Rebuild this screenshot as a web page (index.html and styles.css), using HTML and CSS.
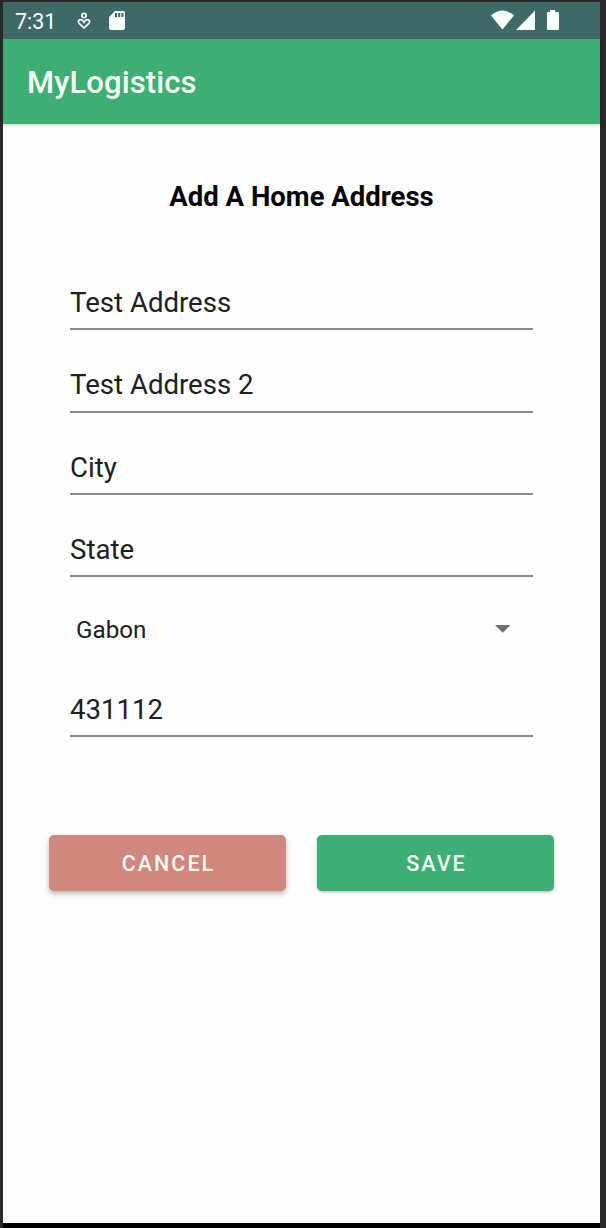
FILE: index.html
```html
<!DOCTYPE html>
<html lang="en">
<head>
<meta charset="utf-8">
<title>MyLogistics</title>
<link rel="stylesheet" href="styles.css">
</head>
<body>
<div class="frame">
  <main class="screen">
    <div class="status">
      <span class="clock">7:31</span>
      <svg class="heart" width="14" height="18" viewBox="0 0 14 18" fill="none" stroke="currentColor" stroke-width="1.7"><circle cx="7" cy="3.5" r="2.2"/><path d="M7 16 2.2 11.3C.5 9.400 1.700 7.700 3.500 7.700 5 7.700 6 8.500 7 10.200 8 8.500 9 7.700 10.500 7.700 12.300 7.700 13.500 9.400 11.800 11.300Z"/></svg>
      <svg class="card" width="16" height="19" viewBox="0 0 16 19"><path fill="currentColor" d="M6 0h8a2 2 0 0 1 2 2v15a2 2 0 0 1-2 2H2a2 2 0 0 1-2-2V6Z"/><path class="slots" d="M6 2h2v4H6zM9.200 2h2v4h-2zM12.400 2h2v4h-2z"/></svg>
      <svg class="signals" width="68" height="21" viewBox="0 0 68 21" fill="currentColor"><path d="M0 5.500Q11.500-4.500 23 5.500L11.500 19.500Z"/><path d="M44 .5V20H25Z"/><path d="M59 0h5v2h3a1 1 0 0 1 1 1v16a1 1 0 0 1-1 1H57a1 1 0 0 1-1-1V3a1 1 0 0 1 1-1h2Z"/></svg>
    </div>
    <header class="appbar">MyLogistics</header>
    <h1 class="title">Add A Home Address</h1>
    <form class="form">
      <div class="field">Test Address</div>
      <div class="field">Test Address 2</div>
      <div class="field">City</div>
      <div class="field">State</div>
      <div class="select"><span>Gabon</span><svg width="16" height="8" viewBox="0 0 16 8"><path fill="#707070" d="M0 0h15.500L7.750 7.800Z"/></svg></div>
      <div class="field">431112</div>
    </form>
    <div class="actions">
      <button class="btn cancel" type="button">CANCEL</button>
      <button class="btn save" type="button">SAVE</button>
    </div>
  </main>
</div>
</body>
</html>
```
FILE: styles.css
```css
* { box-sizing: border-box; }
body { margin: 0; font-family: Roboto, sans-serif; }
.frame {
  height: 1228px;
  padding: 2px 6px 5px 3px;
  background: linear-gradient(#000, #000) 3px 100% / 597px 5px no-repeat, #29292b;
}
.screen { height: 1221px; background: #fefefe; }
.status {
  display: flex;
  align-items: center;
  height: 36.5px;
  padding: 1px 41px 0 12px;
  background: #3f6967;
  color: #f7ffff;
}
.clock { width: 62px; font-size: 21.5px; line-height: 36px; padding-top: 2px; }
.heart { flex: none; }
.card { margin-left: 18px; }
.slots { fill: #3f6967; }
.signals { margin-left: auto; }
.appbar {
  height: 85.5px;
  padding-left: 24px;
  background: #3fae74;
  color: #f5fff8;
  font-size: 31px;
  font-weight: 500;
  letter-spacing: .1px;
  line-height: 88px;
  box-shadow: 0 1px 3px rgba(0, 0, 0, .2);
}
.title {
  margin: 55px 0 0;
  text-align: center;
  color: #050505;
  font-size: 27.5px;
  font-weight: 700;
  line-height: 36px;
}
.form { margin: 0 67px; padding-top: 33px; color: #202020; }
.field {
  height: 82.3px;
  padding-top: 39px;
  border-bottom: 2px solid #8a8a8a;
  font-size: 27.6px;
  line-height: 32px;
}
.select {
  display: flex;
  align-items: center;
  justify-content: space-between;
  height: 78px;
  padding: 26px 22px 0 6px;
  font-size: 24.2px;
}
.select span { padding-top: 1px; }
.actions { display: flex; gap: 31px; padding: 98px 46px 0; }
.btn {
  width: 237px;
  height: 56px;
  padding: 1px 0 0 2px;
  border: 0;
  border-radius: 5px;
  color: #fff8f0;
  font: 500 21.500px Roboto, sans-serif;
  letter-spacing: 2px;
}
.cancel { background: #d0877d; box-shadow: 0 3px 5px rgba(60, 60, 40, .35); }
.save { background: #3fae74; color: #f2fff6; box-shadow: 0 1px 3px rgba(0, 0, 0, .3); }
```
